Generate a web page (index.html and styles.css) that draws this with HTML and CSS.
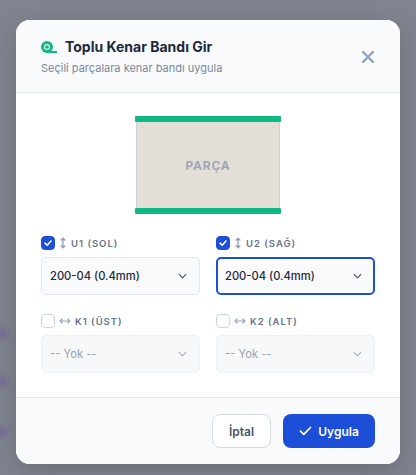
FILE: index.html
```html
<!DOCTYPE html>
<html lang="tr">
<head>
    <meta charset="UTF-8">
    <meta name="viewport" content="width=device-width, initial-scale=1.0">
    <title>Toplu Kenar Bandı Gir</title>
    <link rel="stylesheet" href="styles.css">
</head>
<body>
    <div class="modal">
        <header class="modal-header">
            <div class="header-text">
                <h1 class="modal-title">
                    <svg class="tape-icon" width="16" height="12" viewBox="0 0 16 12">
                        <circle cx="6" cy="6" r="6" fill="#10b981"/>
                        <rect x="6" y="10" width="10" height="2" rx="0.5" fill="#10b981"/>
                        <circle cx="6" cy="6" r="2.4" fill="none" stroke="#fff" stroke-width="1.1"/>
                    </svg>
                    Toplu Kenar Bandı Gir
                </h1>
                <p class="modal-subtitle">Seçili parçalara kenar bandı uygula</p>
            </div>
            <button class="close-button" type="button" aria-label="Kapat">
                <svg width="12" height="12" viewBox="0 0 12 12">
                    <path d="M1 1L11 11M11 1L1 11" stroke="#94a3b8" stroke-width="2.4" stroke-linecap="round"/>
                </svg>
            </button>
        </header>

        <main class="modal-body">
            <div class="preview">
                <div class="band"></div>
                <div class="part">PARÇA</div>
                <div class="band"></div>
            </div>

            <div class="fields">
                <div class="field">
                    <label class="field-label">
                        <span class="check checked">
                            <svg width="10" height="10" viewBox="0 0 10 10"><path d="M2 5.2L4.2 7.2L8 3" fill="none" stroke="#fff" stroke-width="1.6" stroke-linecap="round" stroke-linejoin="round"/></svg>
                        </span>
                        <svg class="arrow" width="8" height="12" viewBox="0 0 8 12"><path d="M4 1.5V10.5M1.7 3.4L4 1.2L6.3 3.4M1.7 8.6L4 10.8L6.3 8.6" fill="none" stroke="#94a3b8" stroke-width="1.4"/></svg>
                        U1 (SOL)
                    </label>
                    <div class="select">
                        <span>200-04 (0.4mm)</span>
                        <svg width="9" height="6" viewBox="0 0 10 6"><path d="M1 1L5 5L9 1" fill="none" stroke="#475569" stroke-width="1.3"/></svg>
                    </div>
                </div>
                <div class="field">
                    <label class="field-label">
                        <span class="check checked">
                            <svg width="10" height="10" viewBox="0 0 10 10"><path d="M2 5.2L4.2 7.2L8 3" fill="none" stroke="#fff" stroke-width="1.6" stroke-linecap="round" stroke-linejoin="round"/></svg>
                        </span>
                        <svg class="arrow" width="8" height="12" viewBox="0 0 8 12"><path d="M4 1.5V10.5M1.7 3.4L4 1.2L6.3 3.4M1.7 8.6L4 10.8L6.3 8.6" fill="none" stroke="#94a3b8" stroke-width="1.4"/></svg>
                        U2 (SAĞ)
                    </label>
                    <div class="select focused">
                        <span>200-04 (0.4mm)</span>
                        <svg width="9" height="6" viewBox="0 0 10 6"><path d="M1 1L5 5L9 1" fill="none" stroke="#475569" stroke-width="1.3"/></svg>
                    </div>
                </div>
                <div class="field">
                    <label class="field-label">
                        <span class="check"></span>
                        <svg class="arrow" width="12" height="8" viewBox="0 0 12 8"><path d="M1.5 4H10.5M3.4 1.7L1.2 4L3.4 6.3M8.6 1.7L10.8 4L8.6 6.3" fill="none" stroke="#94a3b8" stroke-width="1.2"/></svg>
                        K1 (ÜST)
                    </label>
                    <div class="select disabled">
                        <span>-- Yok --</span>
                        <svg width="9" height="6" viewBox="0 0 10 6"><path d="M1 1L5 5L9 1" fill="none" stroke="#a8b1bf" stroke-width="1.3"/></svg>
                    </div>
                </div>
                <div class="field">
                    <label class="field-label">
                        <span class="check"></span>
                        <svg class="arrow" width="12" height="8" viewBox="0 0 12 8"><path d="M1.5 4H10.5M3.4 1.7L1.2 4L3.4 6.3M8.6 1.7L10.8 4L8.6 6.3" fill="none" stroke="#94a3b8" stroke-width="1.2"/></svg>
                        K2 (ALT)
                    </label>
                    <div class="select disabled">
                        <span>-- Yok --</span>
                        <svg width="9" height="6" viewBox="0 0 10 6"><path d="M1 1L5 5L9 1" fill="none" stroke="#a8b1bf" stroke-width="1.3"/></svg>
                    </div>
                </div>
            </div>
        </main>

        <footer class="modal-footer">
            <button class="btn btn-cancel" type="button">İptal</button>
            <button class="btn btn-apply" type="button">
                <svg width="13" height="10" viewBox="0 0 13 10"><path d="M1.5 5.2L4.8 8.3L11.5 1.5" fill="none" stroke="#fff" stroke-width="1.7" stroke-linecap="round" stroke-linejoin="round"/></svg>
                Uygula
            </button>
        </footer>
    </div>
</body>
</html>
```

FILE: styles.css
```css
* {
    box-sizing: border-box;
}
html, body {
    height: 100%;
}
body {
    margin: 0;
    padding: 20px 16px 11px;
    overflow: hidden;
    font-family: Inter, "Liberation Sans", sans-serif;
    background-color: #82858f;
    background-image:
        radial-gradient(circle at 2px 334px, rgba(112, 88, 160, 0.5), transparent 9px),
        radial-gradient(circle at 2px 382px, rgba(112, 88, 160, 0.5), transparent 9px),
        radial-gradient(circle at 2px 432px, rgba(112, 88, 160, 0.5), transparent 9px);
}
.modal {
    display: flex;
    flex-direction: column;
    height: 444px;
    background-color: #fff;
    border-radius: 14px;
    box-shadow: 0 8px 30px rgba(15, 23, 42, 0.22);
    overflow: hidden;
}
.modal-header {
    display: flex;
    align-items: center;
    justify-content: space-between;
    height: 73px;
    padding: 0 26px 0 25px;
    background-color: #f8fafc;
    border-bottom: 1px solid #e2e8f0;
}
.modal-title {
    display: flex;
    align-items: center;
    gap: 8px;
    margin: 0;
    font-size: 14px;
    line-height: 20px;
    font-weight: 700;
    color: #1e293b;
}
.modal-subtitle {
    margin: 3px 0 0;
    font-size: 11px;
    line-height: 16px;
    color: #7b889c;
}
.close-button {
    display: flex;
    padding: 0;
    margin: 2px 0 0;
    background: none;
    border: none;
}
.modal-body {
    flex: 1;
    padding: 23px 25px 0;
}
.preview {
    display: flex;
    flex-direction: column;
    width: 146px;
    margin: 0 auto 21px;
}
.band {
    height: 6px;
    background-color: #10b981;
    border-radius: 1px;
}
.part {
    display: flex;
    align-items: center;
    justify-content: center;
    height: 86px;
    margin: 0 1px;
    background-color: #e3ded6;
    border-left: 1px solid #cbd0da;
    border-right: 1px solid #cbd0da;
    font-size: 12px;
    font-weight: 700;
    letter-spacing: 0.8px;
    color: #a0a7b6;
}
.fields {
    display: grid;
    grid-template-columns: 1fr 1fr;
    column-gap: 16px;
    row-gap: 18px;
}
.field-label {
    display: flex;
    align-items: center;
    gap: 4px;
    height: 16px;
    margin-bottom: 6px;
    font-size: 9.5px;
    font-weight: 600;
    letter-spacing: 1px;
    color: #64748b;
}
.check {
    display: flex;
    align-items: center;
    justify-content: center;
    width: 14px;
    height: 14px;
    background-color: #fff;
    border: 1px solid #cbd5e1;
    border-radius: 4px;
}
.check.checked {
    background-color: #1d4ed8;
    border-color: #1d4ed8;
}
.arrow {
    flex: none;
}
.select {
    display: flex;
    align-items: center;
    justify-content: space-between;
    height: 38px;
    padding: 0 12px 0 8px;
    background-color: #f8fafc;
    border: 1px solid #e2e8f0;
    border-radius: 5px;
    font-size: 11.2px;
    font-weight: 500;
    color: #1e293b;
}
.select.focused {
    border: 2px solid #1d4ed8;
    padding: 0 11px 0 7px;
}
.select.disabled {
    background-color: #f6f8fa;
    border-color: #eef1f5;
    color: #98a1af;
    font-weight: 400;
}
.modal-footer {
    display: flex;
    justify-content: flex-end;
    gap: 12px;
    height: 67px;
    padding: 16px 25px 0;
    background-color: #f8fafc;
    border-top: 1px solid #e2e8f0;
}
.btn {
    display: flex;
    align-items: center;
    justify-content: center;
    gap: 6px;
    height: 34px;
    border-radius: 8px;
    font-family: inherit;
    font-size: 12px;
    font-weight: 600;
}
.btn-cancel {
    width: 59px;
    background-color: #fff;
    border: 1px solid #d5d9e0;
    color: #475569;
}
.btn-apply {
    width: 92px;
    background-color: #1d4ed8;
    border: none;
    color: #fff;
}
```
